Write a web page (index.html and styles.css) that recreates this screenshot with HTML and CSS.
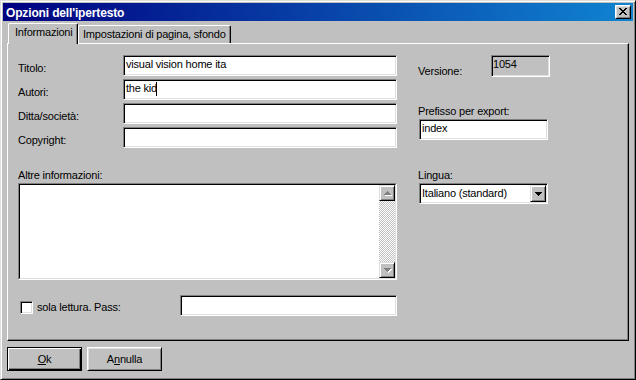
FILE: index.html
```html
<!DOCTYPE html>
<html lang="it">
<head>
<meta charset="utf-8">
<title>Opzioni dell'ipertesto</title>
<link rel="stylesheet" href="styles.css">
</head>
<body>
<div class="window">
  <div class="titlebar">
    <span class="title">Opzioni dell'ipertesto</span>
    <div class="close-btn">
      <svg class="close-glyph" width="8" height="7" viewBox="0 0 8 7" shape-rendering="crispEdges"><path fill="#000" d="M0 0h2v1h-2zM6 0h2v1h-2zM1 1h2v1h-2zM5 1h2v1h-2zM2 2h4v1h-4zM3 3h2v1h-2zM2 4h4v1h-4zM1 5h2v1h-2zM5 5h2v1h-2zM0 6h2v1h-2zM6 6h2v1h-2z"/></svg>
    </div>
  </div>
  <div class="content">
    <div class="tabs">
      <div class="tab tab-active">Informazioni</div>
      <div class="tab tab-second">Impostazioni di pagina, sfondo</div>
    </div>
    <div class="panel">
      <div class="col-left">
        <div class="form-grid">
          <div class="label grid-label">Titolo:</div>
          <div class="field">visual vision home ita</div>
          <div class="label grid-label">Autori:</div>
          <div class="field">the kid<span class="caret"></span></div>
          <div class="label grid-label">Ditta/società:</div>
          <div class="field"></div>
          <div class="label grid-label">Copyright:</div>
          <div class="field"></div>
        </div>
        <div class="label notes-label">Altre informazioni:</div>
        <div class="textarea">
          <div class="textarea-inner">
            <div class="textarea-text"></div>
            <div class="scrollbar">
              <div class="sb-btn">
                <svg width="8" height="5" viewBox="0 0 8 5" shape-rendering="crispEdges"><path fill="#fff" d="M4 1h1v1h-1zM3 2h3v1h-3zM2 3h5v1h-5zM1 4h7v1h-7z"/><path fill="#808080" d="M3 0h1v1h-1zM2 1h3v1h-3zM1 2h5v1h-5zM0 3h7v1h-7z"/></svg>
              </div>
              <div class="sb-track"></div>
              <div class="sb-btn">
                <svg width="8" height="5" viewBox="0 0 8 5" shape-rendering="crispEdges"><path fill="#fff" d="M1 1h7v1h-7zM2 2h5v1h-5zM3 3h3v1h-3zM4 4h1v1h-1z"/><path fill="#808080" d="M0 0h7v1h-7zM1 1h5v1h-5zM2 2h3v1h-3zM3 3h1v1h-1z"/></svg>
              </div>
            </div>
          </div>
        </div>
        <div class="readonly-row">
          <div class="checkbox"></div>
          <div class="label check-label">sola lettura. Pass:</div>
          <div class="field pass-field"></div>
        </div>
      </div>
      <div class="col-right">
        <div class="version-row">
          <div class="label version-label">Versione:</div>
          <div class="version-box">1054</div>
        </div>
        <div class="label prefix-label">Prefisso per export:</div>
        <div class="field right-field">index</div>
        <div class="label lang-label">Lingua:</div>
        <div class="combo">
          <div class="combo-text">Italiano (standard)</div>
          <div class="combo-btn">
            <svg width="7" height="4" viewBox="0 0 7 4" shape-rendering="crispEdges"><path fill="#000" d="M0 0h7v1h-7zM1 1h5v1h-5zM2 2h3v1h-3zM3 3h1v1h-1z"/></svg>
          </div>
        </div>
      </div>
    </div>
    <div class="buttons">
      <div class="btn btn-default"><span><u>O</u>k</span></div>
      <div class="btn"><span>A<u>n</u>nulla</span></div>
    </div>
  </div>
</div>
</body>
</html>
```

FILE: styles.css
```css
* { box-sizing: border-box; }
html, body { margin: 0; padding: 0; }
body {
  width: 636px;
  height: 380px;
  overflow: hidden;
  background: #c0c0c0;
  font-family: "Liberation Sans", Arial, sans-serif;
  font-size: 11px;
  line-height: 13px;
  letter-spacing: -0.2px;
  color: #000;
}

.window {
  width: 636px;
  height: 380px;
  background: #c0c0c0;
  border: 1px solid;
  border-color: #dfdfdf #000 #000 #dfdfdf;
  box-shadow: inset 1px 1px #fff, inset -1px -1px #808080;
  padding: 2px;
  display: flex;
  flex-direction: column;
}

.titlebar {
  height: 18px;
  flex: none;
  background: linear-gradient(to right, #000080, #1084d0);
  display: flex;
  align-items: flex-start;
  padding: 0 2px;
}
.title {
  color: #fff;
  font-weight: bold;
  font-size: 12px;
  letter-spacing: -0.15px;
  line-height: 18px;
  padding-top: 1px;
  padding-left: 1px;
}
.close-btn {
  margin-left: auto;
  margin-top: 2px;
  width: 16px;
  height: 14px;
  background: #c0c0c0;
  border: 1px solid;
  border-color: #fff #000 #000 #fff;
  box-shadow: inset 1px 1px #dfdfdf, inset -1px -1px #808080;
  padding: 2px 0 0 3px;
}
.close-glyph { display: block; }

.content {
  flex: 1;
  display: flex;
  flex-direction: column;
  padding: 0 4px;
}

.tabs {
  margin-top: 2px;
  height: 20px;
  display: flex;
  align-items: flex-end;
  padding-left: 1px;
  flex: none;
}
.tab {
  height: 18px;
  background: #c0c0c0;
  border-top: 1px solid #fff;
  border-left: 1px solid #fff;
  border-right: 1px solid #000;
  border-radius: 2px 2px 0 0;
  box-shadow: inset -1px 0 #808080;
  padding: 2px 0 0 4px;
  white-space: nowrap;
}
.tab-active {
  width: 70px;
  height: 21px;
  margin-bottom: -1px;
  position: relative;
  z-index: 1;
  padding: 2px 0 0 6px;
}
.tab-second {
  width: 153px;
}

.panel {
  height: 298px;
  flex: none;
  border: 1px solid;
  border-color: #fff #000 #000 #fff;
  box-shadow: inset -1px -1px #808080;
  padding: 11px 0 0 10px;
  display: flex;
  gap: 21px;
}

.col-left {
  width: 379px;
  display: flex;
  flex-direction: column;
}
.form-grid {
  display: grid;
  grid-template-columns: 105px 274px;
  grid-auto-rows: 21px;
  row-gap: 3px;
}
.label { white-space: nowrap; }
.grid-label { padding-top: 7px; }

.field {
  height: 21px;
  background: #fff;
  border: 1px solid;
  border-color: #808080 #fff #fff #808080;
  box-shadow: inset 1px 1px #000, inset -1px -1px #dfdfdf;
  padding: 2px 2px 0;
  white-space: nowrap;
  overflow: hidden;
}
.caret {
  display: inline-block;
  width: 1px;
  height: 14px;
  background: #000;
  vertical-align: top;
  margin-left: -1px;
}

.notes-label { margin-top: 21px; }
.textarea {
  margin-top: 1px;
  height: 97px;
  border: 1px solid;
  border-color: #808080 #fff #fff #808080;
}
.textarea-inner {
  height: 100%;
  border: 1px solid;
  border-color: #000 #dfdfdf #dfdfdf #000;
  background: #fff;
  display: flex;
}
.textarea-text { flex: 1; }
.scrollbar {
  width: 16px;
  display: flex;
  flex-direction: column;
  background: repeating-conic-gradient(#c0c0c0 0 25%, #fff 0 50%) 0 0 / 2px 2px;
}
.sb-btn {
  width: 16px;
  height: 16px;
  flex: none;
  background: #c0c0c0;
  border: 1px solid;
  border-color: #dfdfdf #000 #000 #dfdfdf;
  box-shadow: inset 1px 1px #fff, inset -1px -1px #808080;
  display: flex;
  align-items: center;
  justify-content: center;
}
.sb-btn svg { display: block; margin-left: 1px; }
.sb-track { flex: 1; }

.readonly-row {
  margin-top: 15px;
  display: flex;
  align-items: flex-start;
  height: 21px;
}
.checkbox {
  width: 13px;
  height: 13px;
  margin: 6px 0 0 2px;
  background: #fff;
  border: 1px solid;
  border-color: #808080 #fff #fff #808080;
  box-shadow: inset 1px 1px #000, inset -1px -1px #dfdfdf;
}
.check-label { margin: 6px 0 0 4px; }
.pass-field { margin-left: auto; width: 217px; }

.col-right {
  width: 132px;
  display: flex;
  flex-direction: column;
}
.version-row { display: flex; align-items: flex-start; }
.version-label { width: 73px; padding-top: 10px; }
.version-box {
  width: 59px;
  height: 22px;
  background: #c0c0c0;
  border: 1px solid;
  border-color: #808080 #fff #fff #808080;
  box-shadow: inset 1px 1px #000, inset -1px -1px #dfdfdf;
  padding: 2px 0 0 1px;
}
.prefix-label { margin-top: 27px; }
.right-field { margin: 1px 0 0 1px; width: 129px; }
.lang-label { margin-top: 29px; }
.combo {
  margin: 1px 0 0 1px;
  width: 129px;
  height: 21px;
  background: #fff;
  border: 1px solid;
  border-color: #808080 #fff #fff #808080;
  box-shadow: inset 1px 1px #000, inset -1px -1px #dfdfdf;
  padding: 1px;
  display: flex;
}
.combo-text { flex: 1; padding: 2px 0 0 1px; white-space: nowrap; }
.combo-btn {
  width: 16px;
  height: 17px;
  background: #c0c0c0;
  border: 1px solid;
  border-color: #dfdfdf #000 #000 #dfdfdf;
  box-shadow: inset 1px 1px #fff, inset -1px -1px #808080;
  display: flex;
  align-items: center;
  justify-content: center;
}
.combo-btn svg { display: block; }

.buttons {
  margin-top: 6px;
  display: flex;
  gap: 5px;
}
.btn {
  width: 75px;
  height: 24px;
  background: #c0c0c0;
  border: 1px solid;
  border-color: #fff #000 #000 #fff;
  box-shadow: inset 1px 1px #dfdfdf, inset -1px -1px #808080;
  display: flex;
  align-items: center;
  justify-content: center;
}
.btn-default {
  border-color: #000;
  box-shadow: inset 1px 1px #fff, inset -1px -1px #000, inset -2px -2px #808080;
}
.btn u { text-decoration: underline; }
```
